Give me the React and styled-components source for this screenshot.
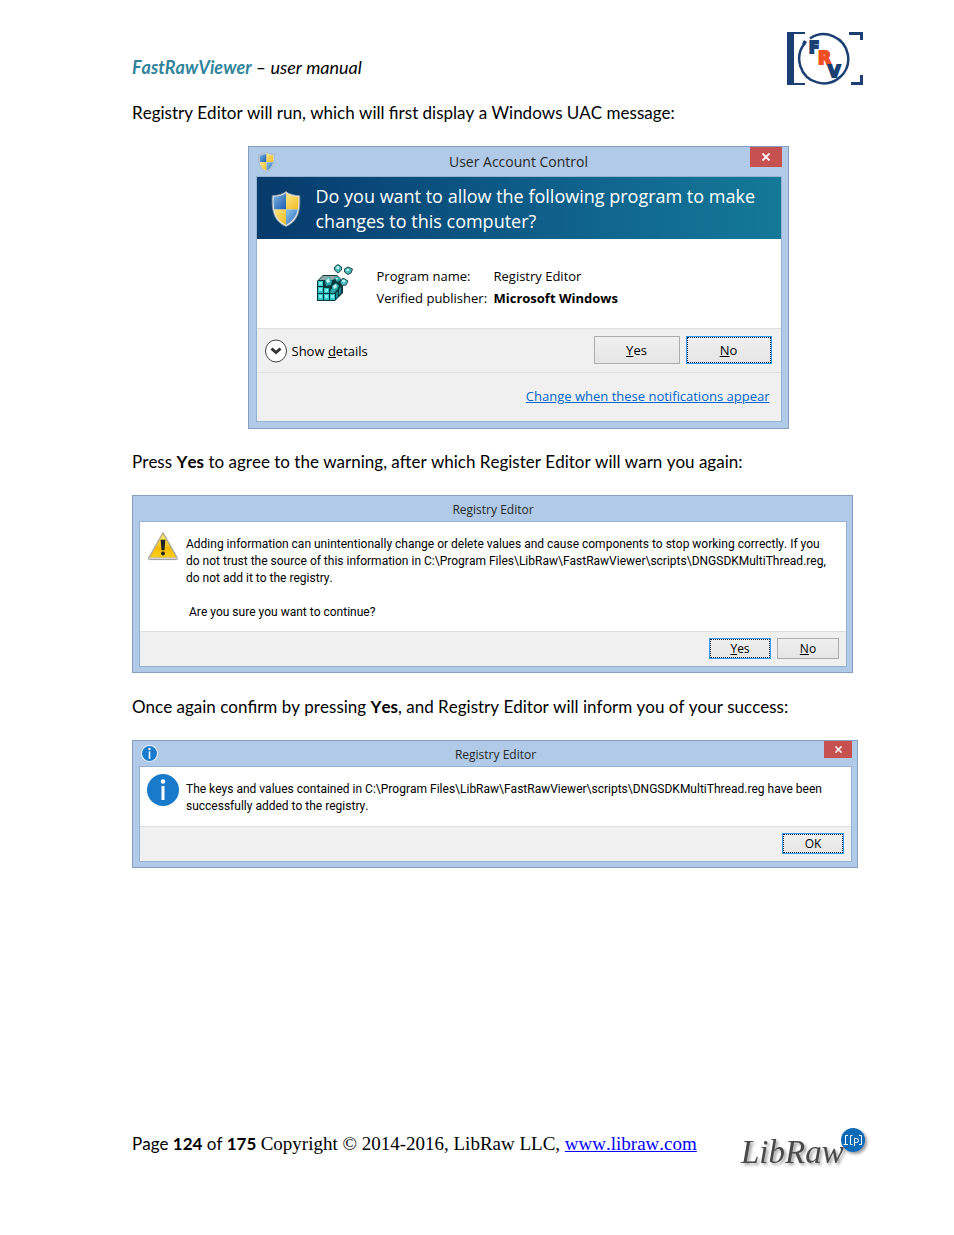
import React from "react";
import styled, { createGlobalStyle, css } from "styled-components";

const GlobalStyle = createGlobalStyle`
  * {
    box-sizing: border-box;
  }
  body {
    margin: 0;
    background: #ffffff;
    color: #000000;
    font-family: Lato, "Liberation Sans", sans-serif;
    font-size: 17px;
    line-height: 22px;
    font-kerning: none;
  }
`;

const Page = styled.div`
  display: flex;
  flex-direction: column;
  min-height: 100vh;
  padding: 32px 50px 60px 132px;
`;

const Header = styled.header`
  display: flex;
  justify-content: space-between;
  align-items: flex-start;
  padding-right: 41px;
  margin-bottom: 17px;
`;

const DocTitle = styled.h1`
  margin: 0;
  padding-top: 24px;
  font-size: 18px;
  font-weight: 400;
  font-style: italic;

  strong {
    color: #31849b;
  }
`;

const Paragraph = styled.p`
  margin: 0 0 22px;
`;

/* ---------- windows ---------- */

const Window = styled.section`
  width: 100%;
  max-width: ${(p) => p.$maxWidth}px;
  align-self: ${(p) => (p.$large ? "center" : "flex-start")};
  margin-bottom: ${(p) => (p.$large ? 22 : 23)}px;
  padding: 0 ${(p) => (p.$large ? 6 : 5)}px ${(p) => (p.$large ? 6 : 5)}px
    ${(p) => (p.$large ? 7 : 6)}px;
  border: 1px solid #85a0bf;
  background: #b0cae7;
  font-family: "Open Sans", "Noto Sans", sans-serif;
  font-size: ${(p) => (p.$large ? 14 : 12)}px;
  line-height: ${(p) => (p.$large ? 22 : 17)}px;
`;

const TitleBar = styled.div`
  display: grid;
  grid-template-columns: 1fr auto 1fr;
  align-items: center;
  height: ${(p) => (p.$large ? 29 : 25)}px;
`;

const TitleIcon = styled.span`
  display: flex;
  padding-left: 2px;
`;

const WindowTitle = styled.h2`
  margin: 0;
  padding-top: 1px;
  font-size: inherit;
  font-weight: 400;
  color: #26292d;
`;

const CloseButton = styled.button`
  justify-self: end;
  align-self: start;
  display: flex;
  align-items: center;
  justify-content: center;
  width: ${(p) => (p.$large ? 32 : 28)}px;
  height: ${(p) => (p.$large ? 20 : 17)}px;
  padding: 0;
  border: 0;
  background: #c75050;
`;

const Client = styled.div`
  border: 1px solid #94b3d3;
  background: #ffffff;
`;

const Banner = styled.div`
  display: flex;
  align-items: center;
  gap: 15px;
  height: 62px;
  padding: 1px 14px 0;
  background: linear-gradient(90deg, #063a6b, #0e5f8a 55%, #147998);
  color: #ffffff;
  font-size: 18px;
  line-height: 25px;
`;

const ProgramInfo = styled.div`
  display: flex;
  align-items: flex-start;
  gap: 22px;
  height: 89px;
  padding: 25px 16px 0 60px;
`;

const Facts = styled.dl`
  display: grid;
  grid-template-columns: 111px 1fr;
  column-gap: 6px;
  margin: 0;
  padding-top: 1px;
  font-size: 13px;

  dt {
    white-space: nowrap;
  }
  dd {
    margin: 0;
  }
`;

const Strip = styled.div`
  display: flex;
  align-items: center;
  justify-content: ${(p) => (p.$split ? "space-between" : "flex-end")};
  gap: 6px;
  height: ${(p) => p.$height}px;
  padding: 0 ${(p) => p.$right}px 2px 8px;
  border-top: 1px solid #dfdfdf;
  background: #f0f0f0;
`;

const Buttons = styled.div`
  display: flex;
  gap: 6px;
`;

const Button = styled.button`
  width: ${(p) => (p.$large ? 86 : 62)}px;
  height: ${(p) => (p.$large ? 28 : 21)}px;
  padding: 1px 0 0;
  border: 1px solid #acacac;
  background: linear-gradient(#f0f0f0, #e5e5e5);
  color: #000000;
  font: inherit;
  font-size: ${(p) => (p.$large ? 13 : 12)}px;
  line-height: 18px;

  ${(p) =>
    p.$focused &&
    css`
      border-color: #3399ff;
      outline: 1px dotted #222222;
      outline-offset: -2px;
    `}
`;

const DetailsButton = styled.button`
  display: flex;
  align-items: center;
  gap: 5px;
  padding: 2px 0 0;
  border: 0;
  background: none;
  color: #000000;
  font: inherit;
  font-size: 13px;
`;

const SettingsLink = styled.a`
  color: #0066cc;
  font-size: 13px;
`;

const Message = styled.div`
  display: flex;
  align-items: flex-start;
  gap: 7px;
  height: ${(p) => p.$height}px;
  padding: ${(p) => p.$top}px 6px 0 7px;

  svg {
    flex: none;
  }
  p {
    margin: 0 0 17px;
  }
  p + p {
    padding-left: 3px;
  }
`;

const MessageText = styled.div`
  padding-top: ${(p) => (p.$lowered ? 7 : 5)}px;
  font-family: Roboto, "Open Sans", sans-serif;
`;

/* ---------- footer ---------- */

const Footer = styled.footer`
  display: flex;
  justify-content: space-between;
  align-items: flex-start;
  margin-top: auto;
  padding-right: 32px;
`;

const FooterText = styled.p`
  margin: 0;
  padding-top: 6px;
  white-space: nowrap;
`;

const Copyright = styled.span`
  font-family: "Liberation Serif", serif;
  font-size: 19px;

  a {
    color: #0000ff;
  }
`;

/* ---------- drawings ---------- */

const FrvLogo = () => (
  <svg width="76" height="53" viewBox="0 0 76 53" role="img" aria-label="FRV">
    <path
      d="M0 0H18V2H7V51H18V53H0ZM62 0H76V8H73V3H62ZM76 43V53H64V50H73V43Z"
      fill="#1b3f73"
    />
    <path
      d="M23 6.5A24.500 24.500 0 1 1 18 11"
      fill="none"
      stroke="#1b3f73"
      strokeWidth="2.500"
    />
    <path d="M17 8L20 10L18 13L15 12Z" fill="#1b3f73" />
    <text
      fontFamily="DejaVu Sans, sans-serif"
      fontWeight="700"
      fontSize="15"
      strokeWidth="2"
      fill="#1b3f73"
      stroke="#1b3f73"
    >
      <tspan x="22" y="21">
        F
      </tspan>
      <tspan x="31" y="32" fontSize="17" fill="#f04e23" stroke="#f04e23">
        R
      </tspan>
      <tspan x="41" y="45" fontSize="16">
        V
      </tspan>
    </text>
  </svg>
);

const Shield = ({ width, height }) => (
  <svg width={width} height={height} viewBox="0 0 28 35" aria-hidden="true">
    <defs>
      <linearGradient id="shieldBlue" x1="0" y1="0" x2="1" y2="1">
        <stop offset="0" stopColor="#8cc4ee" />
        <stop offset="1" stopColor="#1c5cae" />
      </linearGradient>
      <linearGradient id="shieldGold" x1="0" y1="0" x2="1" y2="1">
        <stop offset="0" stopColor="#fdea8a" />
        <stop offset="1" stopColor="#f0b81c" />
      </linearGradient>
      <clipPath id="shieldClip">
        <path d="M14 2C11 4.500 6.500 5.500 2 5.500C1.500 18 3 27 14 33C25 27 26.500 18 26 5.500C21.500 5.500 17 4.500 14 2Z" />
      </clipPath>
    </defs>
    <path
      d="M14 0.500C11 3 6 4.500 0.700 4.500C0 18 1.500 29 14 34.500C26.500 29 28 18 27.300 4.500C22 4.500 17 3 14 0.500Z"
      fill="#e3e6e8"
      stroke="#8a949c"
      strokeWidth="0.800"
    />
    <g clipPath="url(#shieldClip)">
      <rect width="14" height="18" fill="url(#shieldBlue)" />
      <rect x="14" width="14" height="18" fill="url(#shieldGold)" />
      <rect y="18" width="14" height="17" fill="url(#shieldGold)" />
      <rect x="14" y="18" width="14" height="17" fill="url(#shieldBlue)" />
    </g>
  </svg>
);

const CloseCross = ({ size }) => (
  <svg width={size} height={size} viewBox="0 0 8 8" aria-hidden="true">
    <path d="M0.500 0.500L7.500 7.500M7.500 0.500L0.500 7.500" stroke="#fff" strokeWidth="1.800" />
  </svg>
);

const RegistryCubes = () => (
  <svg width="38" height="38" viewBox="0 0 38 38" aria-hidden="true">
    <path d="M0 17L6 11H20L26 17V29L18 37H0Z" fill="#0a3a3e" />
    {/* top face */}
    <path d="M2 16L6 12H21L16 16Z" fill="#8fa9a9" />
    {/* front face */}
    <g fill="#2fc4c4">
      <path d="M1 17H6V22H1ZM1 23H6V29H1ZM1 30H6V36H1Z" />
      <path d="M7 24H12V29H7ZM7 30H12V36H7ZM13 30H18V36H13Z" />
    </g>
    <g fill="#7deeee">
      <path d="M2 18H5V21H2ZM2 24H5V27H2ZM2 31H5V34H2ZM8 25H11V28H8ZM8 31H11V34H8ZM14 31H17V34H14Z" />
    </g>
    {/* broken corner */}
    <g fill="#2aa9aa">
      <path d="M8 16L12 13L15 17L14 21L9 22Z" />
      <path d="M15 22L19 19L22 22L20 26L15 27Z" />
      <path d="M17 13H22L24 16L20 18Z" />
      <path d="M14 25L17 24L19 27L17 29L13 29Z" />
    </g>
    <g fill="#c4f7f6">
      <path d="M9 16L12 14L13 18L10 19ZM16 22L19 20L20 23L17 25ZM18 14H21L20 16Z" />
    </g>
    {/* right face */}
    <g fill="#168a8c">
      <path d="M19 29L21 27V33L19 35ZM22 25L24 23V29L22 31Z" />
    </g>
    {/* loose pieces */}
    <g stroke="#23484c" strokeWidth="1">
      <path d="M21 0.500L24.500 3V6L21 9L17.500 6V3Z" fill="#4cb9b9" />
      <path d="M31 3L35.500 5L34 9L31 10.500L27.500 8V5Z" fill="#4cb9b9" />
      <path d="M26 14L31 17L29 21L25 21.500L23 18Z" fill="#4cc4c3" />
    </g>
    <g fill="#b8f6f4">
      <path d="M20 2H22V5H19ZM30 5H32V7H29ZM25 16H28V18H25Z" />
    </g>
  </svg>
);

const DetailsIcon = () => (
  <svg width="22" height="24" viewBox="0 0 22 24" aria-hidden="true">
    <ellipse cx="11" cy="12" rx="10.500" ry="11" fill="#fff" stroke="#444" />
    <path d="M6.500 9.500L11 13.500L15.500 9.500" fill="none" stroke="#333" strokeWidth="3" />
  </svg>
);

const WarningIcon = () => (
  <svg width="32" height="30" viewBox="0 0 33 30" aria-hidden="true">
    <defs>
      <linearGradient id="warning" x1="0" y1="0" x2="0" y2="1">
        <stop offset="0" stopColor="#fdf07c" />
        <stop offset="0.550" stopColor="#f2c418" />
        <stop offset="0.600" stopColor="#f5b800" />
        <stop offset="1" stopColor="#fbd21c" />
      </linearGradient>
    </defs>
    <path
      d="M16.500 1L31.500 27.500Q32 29 30.500 29H2.500Q1 29 1.500 27.500Z"
      fill="#d6d6d6"
      stroke="#9b9b9b"
      strokeLinejoin="round"
    />
    <path d="M16.500 2.500L30 26.500H3Z" fill="url(#warning)" stroke="#c9a227" strokeWidth="0.500" />
    <path d="M14 8.500H19L18 19.500H15Z" fill="#222" />
    <circle cx="16.500" cy="22.800" r="2" fill="#222" />
  </svg>
);

const InfoIcon = ({ size, ring }) => (
  <svg width={size} height={size} viewBox="0 0 32 32" aria-hidden="true">
    <circle cx="16" cy="16" r="16" fill={ring ? "#e6f1fb" : "#1979ca"} />
    <circle cx="16" cy="16" r="14" fill="#1979ca" />
    <circle cx="16" cy="7.500" r="2.200" fill="#fff" />
    <rect x="14.500" y="12" width="3" height="14" fill="#fff" />
  </svg>
);

const LibRawLogo = () => (
  <svg width="132" height="48" viewBox="0 0 132 48" role="img" aria-label="LibRaw">
    <defs>
      <filter id="logoShadow" x="-10%" y="-10%" width="130%" height="140%">
        <feDropShadow dx="2" dy="2" stdDeviation="1.500" floodColor="#000" floodOpacity="0.400" />
      </filter>
    </defs>
    <g filter="url(#logoShadow)">
      <text
        x="1"
        y="36"
        fill="#4a4a4a"
        fontFamily="Liberation Serif, serif"
        fontStyle="italic"
        fontSize="33"
      >
        LibRaw
      </text>
      <circle cx="113" cy="13" r="12" fill="#0a6ab6" />
    </g>
    <g fill="none" stroke="#fff" strokeWidth="1">
      <path d="M108 8.500H105.500V17.500M103.500 17.500H108" />
      <path d="M112.500 8.500H110.500V17.500H112.500" />
      <path d="M119 8.500H121.500V17.500H119" />
      <path d="M114.500 19V11.500H116.500Q118.500 11.500 118.500 13.500Q118.500 15.500 116.500 15.500H114.500" />
    </g>
  </svg>
);

const App = () => {
  return (
    <>
      <GlobalStyle />
      <Page>
        <Header>
          <DocTitle>
            <strong>FastRawViewer</strong> – user manual
          </DocTitle>
          <FrvLogo />
        </Header>

        <Paragraph>
          Registry Editor will run, which will first display a Windows UAC
          message:
        </Paragraph>

        <Window $large $maxWidth={541}>
          <TitleBar $large>
            <TitleIcon>
              <Shield width={17} height={20} />
            </TitleIcon>
            <WindowTitle>User Account Control</WindowTitle>
            <CloseButton $large aria-label="Close">
              <CloseCross size={8} />
            </CloseButton>
          </TitleBar>
          <Client>
            <Banner>
              <Shield width={30} height={36} />
              <span>
                Do you want to allow the following program to make
                <br />
                changes to this computer?
              </span>
            </Banner>
            <ProgramInfo>
              <RegistryCubes />
              <Facts>
                <dt>Program name:</dt>
                <dd>Registry Editor</dd>
                <dt>Verified publisher:</dt>
                <dd>
                  <b>Microsoft Windows</b>
                </dd>
              </Facts>
            </ProgramInfo>
            <Strip $split $height={44} $right={9}>
              <DetailsButton>
                <DetailsIcon />
                <span>
                  Show <u>d</u>etails
                </span>
              </DetailsButton>
              <Buttons>
                <Button $large>
                  <u>Y</u>es
                </Button>
                <Button $large $focused>
                  <u>N</u>o
                </Button>
              </Buttons>
            </Strip>
            <Strip $height={49} $right={11}>
              <SettingsLink href="#notifications">
                Change when these notifications appear
              </SettingsLink>
            </Strip>
          </Client>
        </Window>

        <Paragraph>
          Press <b>Yes</b> to agree to the warning, after which Register Editor
          will warn you again:
        </Paragraph>

        <Window $maxWidth={721}>
          <TitleBar>
            <span />
            <WindowTitle>Registry Editor</WindowTitle>
          </TitleBar>
          <Client>
            <Message $height={109} $top={9}>
              <WarningIcon />
              <MessageText>
                <p>
                  Adding information can unintentionally change or delete values
                  and cause components to stop working correctly. If you
                  <br />
                  do not trust the source of this information in C:\Program
                  Files\LibRaw\FastRawViewer\scripts\DNGSDKMultiThread.reg,
                  <br />
                  do not add it to the registry.
                </p>
                <p>Are you sure you want to continue?</p>
              </MessageText>
            </Message>
            <Strip $height={35} $right={7}>
              <Button $focused>
                <u>Y</u>es
              </Button>
              <Button>
                <u>N</u>o
              </Button>
            </Strip>
          </Client>
        </Window>

        <Paragraph>
          Once again confirm by pressing <b>Yes</b>, and Registry Editor will
          inform you of your success:
        </Paragraph>

        <Window $maxWidth={726}>
          <TitleBar>
            <TitleIcon>
              <InfoIcon size={17} ring />
            </TitleIcon>
            <WindowTitle>Registry Editor</WindowTitle>
            <CloseButton aria-label="Close">
              <CloseCross size={7} />
            </CloseButton>
          </TitleBar>
          <Client>
            <Message $height={59} $top={7}>
              <InfoIcon size={32} />
              <MessageText $lowered>
                <p>
                  The keys and values contained in C:\Program
                  Files\LibRaw\FastRawViewer\scripts\DNGSDKMultiThread.reg have
                  been
                  <br />
                  successfully added to the registry.
                </p>
              </MessageText>
            </Message>
            <Strip $height={35} $right={7}>
              <Button $focused>OK</Button>
            </Strip>
          </Client>
        </Window>

        <Footer>
          <FooterText>
            Page <b>124</b> of <b>175</b>{" "}
            <Copyright>
              Copyright © 2014-2016, LibRaw LLC,{" "}
              <a href="#libraw">www.libraw.com</a>
            </Copyright>
          </FooterText>
          <LibRawLogo />
        </Footer>
      </Page>
    </>
  );
};

export default App;
